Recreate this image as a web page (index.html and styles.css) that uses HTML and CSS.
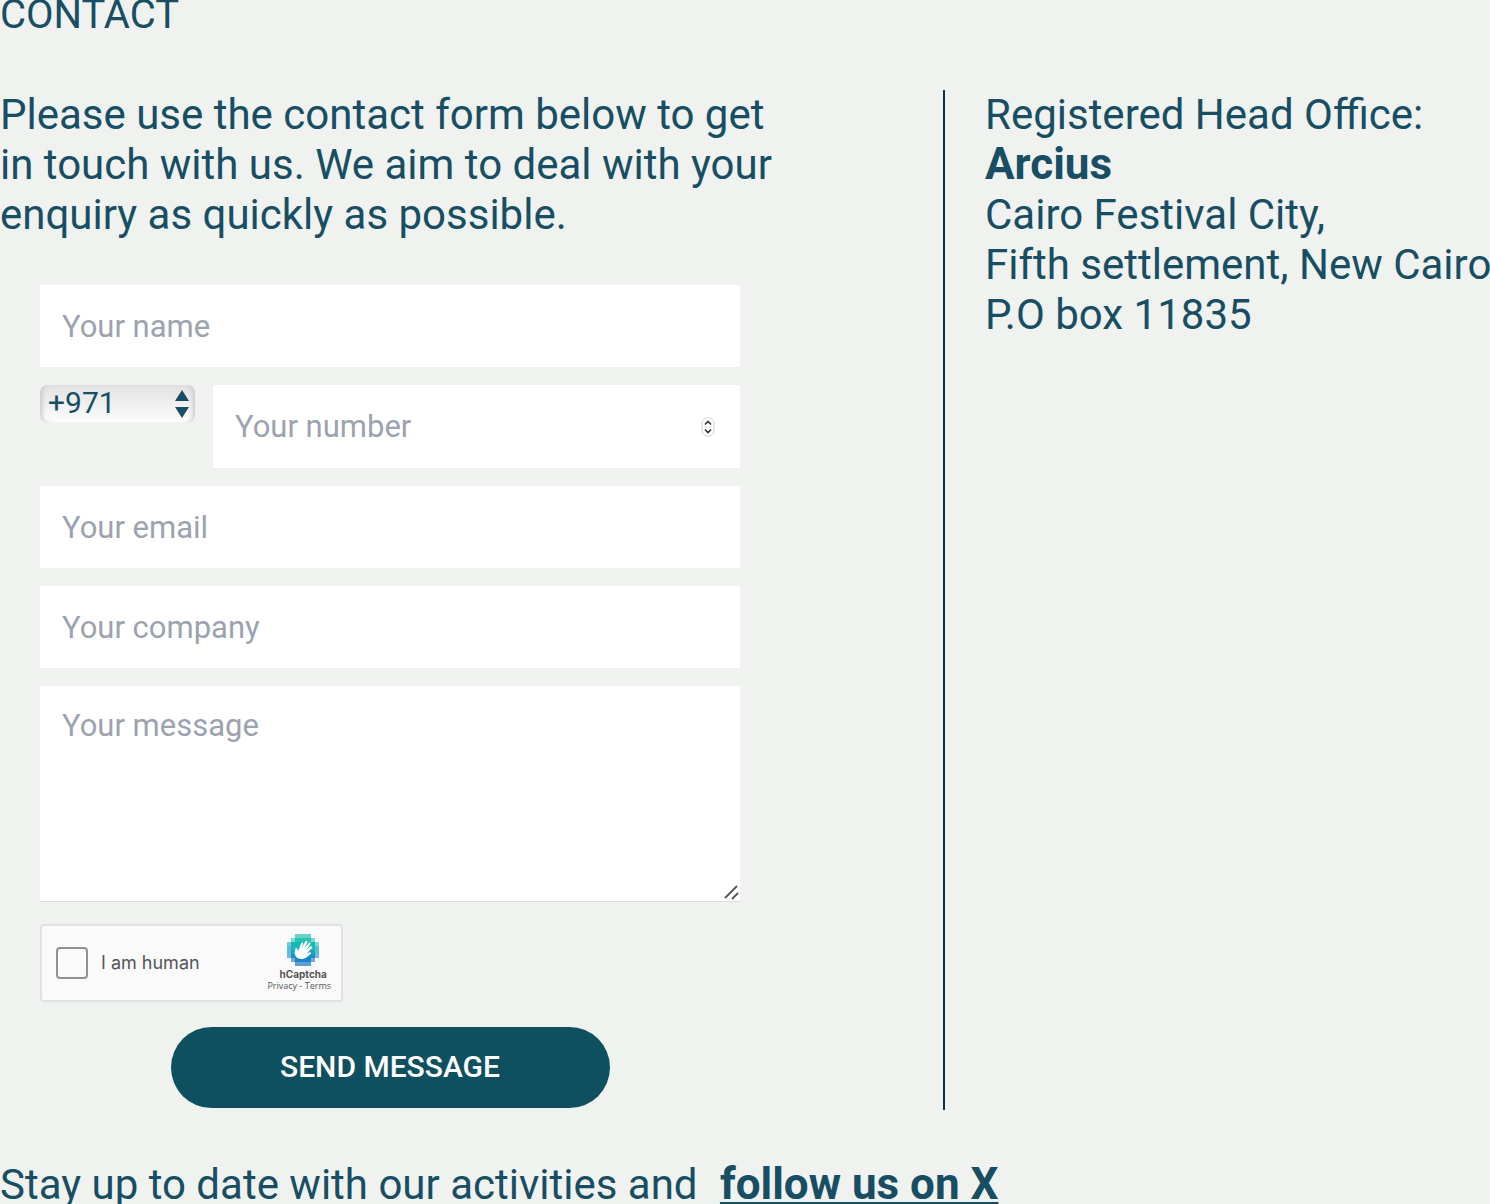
FILE: index.html
```html
<!DOCTYPE html>
<html lang="en">
<head>
  <meta charset="UTF-8">
  <title>Contact</title>
  <meta name="viewport" content="width=device-width, initial-scale=1">
  <link rel="stylesheet" href="styles.css">
</head>
<body>
  <h1>CONTACT</h1>

  <main class="columns">
    <section class="contact">
      <p class="intro">Please use the contact form below to get<br>in touch with us. We aim to deal with your<br>enquiry as quickly as possible.</p>

      <form class="contact-form">
        <input type="text" name="name" placeholder="Your name" aria-label="Your name">

        <div class="phone-row">
          <div class="code">
            <select name="code" aria-label="Country code">
              <option>+971</option>
              <option>+20</option>
            </select>
            <svg class="code-arrows" viewBox="0 0 14 28" aria-hidden="true">
              <path d="M7 0L14 11H0zM0 17H14L7 28z" fill="#174e63"/>
            </svg>
          </div>
          <div class="number">
            <input type="number" name="number" placeholder="Your number" aria-label="Your number">
            <svg class="stepper" viewBox="0 0 14 20" aria-hidden="true">
              <rect x="1" y="1" width="12" height="18" rx="5" fill="#fff" stroke="#d4d4d4"/>
              <path d="M1 10H13" stroke="#e2e2e2"/>
              <path d="M4 7.500L7 4.500L10 7.500M4 12.500L7 15.500L10 12.500" fill="none" stroke="#333" stroke-width="1.600"/>
            </svg>
          </div>
        </div>

        <input type="email" name="email" placeholder="Your email" aria-label="Your email">
        <input type="text" name="company" placeholder="Your company" aria-label="Your company">
        <div class="message">
          <textarea name="message" placeholder="Your message" aria-label="Your message"></textarea>
          <svg class="grip" viewBox="0 0 16 16" aria-hidden="true">
            <path d="M1 14L13 2M8 15L14 9" stroke="#555" stroke-width="1.800"/>
          </svg>
        </div>

        <div class="captcha">
          <input type="checkbox" id="human">
          <label for="human">I am human</label>
          <div class="captcha-brand">
            <svg viewBox="0 0 32 32" aria-hidden="true" shape-rendering="crispEdges">
              <path d="M8 0H24V4H28V8H32V24H28V28H24V32H8V28H4V24H0V8H4V4H8z" fill="#21b5bc"/>
              <path d="M8 0H24V4H8z" fill="#62d6c9"/>
              <path d="M4 4H28V8H4z" fill="#27c2b5"/>
              <path d="M4 4H8V8H4zM24 4H28V8H24zM28 8H32V12H28z" fill="#7cdacf"/>
              <path d="M4 8H28V12H4z" fill="#12b8b2"/>
              <path d="M0 8H4V12H0z" fill="#75ccd2"/>
              <path d="M0 12H4V20H0zM28 12H32V20H28z" fill="#5dbfd3"/>
              <path d="M4 16H28V20H4z" fill="#16a5c4"/>
              <path d="M4 20H28V24H4z" fill="#1891c7"/>
              <path d="M0 20H4V24H0zM28 20H32V24H28z" fill="#75b7df"/>
              <path d="M4 24H28V28H4z" fill="#2085c8"/>
              <path d="M4 24H8V28H4zM24 24H28V28H24z" fill="#73a9dc"/>
              <path d="M8 28H24V32H8z" fill="#5b9fda"/>
              <path shape-rendering="auto" d="M8.500 14.500C9.800 13.500 10.500 15 11.300 17L14 9.500C14.800 7.700 16.700 8.300 16.200 10L14.700 14.300L18.300 7.600C19.400 5.900 21.100 7 20.300 8.600L17 15L21.500 9C22.800 7.500 24.400 8.800 23.300 10.400L19 16.300L23.300 12.600C24.800 11.500 26 13.100 24.700 14.500L19.800 19.500L22.500 18.300C24 17.700 24.700 19.200 23.500 20.200C20 22.500 18.500 25 14.500 25C10 25 7.600 21.700 7.600 18.500z" fill="#fff"/>
            </svg>
            <strong>hCaptcha</strong>
            <small><a href="#">Privacy</a> - <a href="#">Terms</a></small>
          </div>
        </div>

        <button type="submit">SEND MESSAGE</button>
      </form>
    </section>

    <address>
      Registered Head Office:<br>
      <strong>Arcius</strong><br>
      Cairo Festival City,<br>
      Fifth settlement, New Cairo<br>
      P.O box 11835
    </address>
  </main>

  <p class="social">Stay up to date with our activities and <a href="#">follow us on X</a></p>
</body>
</html>
```

FILE: styles.css
```css
:root {
  --ink: #174e63;
  --page: #eff2ef;
}
* {
  box-sizing: border-box;
}
body {
  margin: 0;
  font-family: Roboto, "Liberation Sans", sans-serif;
  font-size: 42px;
  line-height: 50px;
  color: var(--ink);
  background: var(--page);
  overflow-x: hidden;
}
h1 {
  margin: 0 0 60px;
  font-size: 40px;
  font-weight: 400;
  line-height: 30px;
}
p {
  margin: 0;
}
.columns {
  display: grid;
  grid-template-columns: minmax(0, 943fr) minmax(0, 547fr);
}
.intro {
  white-space: nowrap;
}
.contact-form {
  display: flex;
  flex-direction: column;
  gap: 18px;
  max-width: 740px;
  margin-top: 45px;
  padding: 0 0 2px 40px;
}
input, textarea, select, button {
  font: inherit;
  color: inherit;
}
.contact-form input:not([type="checkbox"]),
textarea {
  display: block;
  width: 100%;
  height: 82px;
  padding: 0 22px;
  font-size: 31px;
  line-height: 36px;
  background: #fff;
  border: none;
  border-radius: 0;
}
::placeholder {
  color: #9ca3af;
  opacity: 1;
}
.phone-row {
  display: flex;
  align-items: flex-start;
  gap: 18px;
}
.code {
  position: relative;
  flex: 0 0 155px;
}
select {
  display: block;
  width: 100%;
  height: 38px;
  padding: 0 8px 2px;
  font-size: 30px;
  line-height: 36px;
  appearance: none;
  border: none;
  border-radius: 8px;
  background: linear-gradient(#e2e2e2, #fdfdfd);
  box-shadow: inset 5px 0 5px -3px #c8c8c8, inset -5px 0 5px -3px #c8c8c8;
}
.code-arrows {
  position: absolute;
  top: 5px;
  right: 6px;
  width: 14px;
  height: 28px;
  pointer-events: none;
}
.number {
  position: relative;
  flex: 1;
}
.stepper {
  position: absolute;
  top: 32px;
  right: 25px;
  width: 14px;
  height: 20px;
}
.contact-form .number input {
  height: 83px;
  appearance: textfield;
}
.message {
  position: relative;
}
.contact-form textarea {
  height: 216px;
  padding-top: 22px;
  border-bottom: 1px solid #d9dddb;
  resize: none;
}
.grip {
  position: absolute;
  right: 0;
  bottom: 2px;
  width: 16px;
  height: 16px;
}
.captcha {
  display: flex;
  align-items: center;
  width: 303px;
  height: 78px;
  margin-top: 4px;
  padding: 0 10px 0 14px;
  color: #555;
  background: #fafafa;
  border: 2px solid #dfe2e0;
  border-radius: 4px;
}
.captcha input {
  width: 32px;
  height: 32px;
  margin: 0;
  appearance: none;
  background: #fafafa;
  border: 2px solid #919191;
  border-radius: 4px;
}
.captcha label {
  flex: 1;
  padding-left: 13px;
  font: 18px/24px Inter, sans-serif;
}
.captcha-brand {
  display: flex;
  flex-direction: column;
  align-items: center;
  line-height: 12px;
}
.captcha-brand svg {
  width: 32px;
  height: 32px;
  margin: 0 0 2px 8px;
}
.captcha-brand strong {
  margin-left: 8px;
  font: 700 10px/12px Inter, sans-serif;
}
.captcha-brand small {
  font: 9px/12px "Open Sans", sans-serif;
}
.captcha-brand a {
  color: inherit;
  text-decoration: none;
}
button {
  align-self: center;
  width: 439px;
  height: 81px;
  margin-top: 7px;
  padding: 0 0 2px;
  font-size: 30px;
  font-weight: 500;
  color: #fff;
  background: #0f5060;
  border: none;
  border-radius: 41px;
}
address {
  padding-left: 40px;
  font-style: normal;
  white-space: nowrap;
  border-left: 2px solid #0b3348;
}
address strong, .social a {
  font-size: 44px;
  font-weight: 700;
  line-height: 1;
}
.social {
  margin-top: 50px;
  white-space: nowrap;
}
.social a {
  margin-left: 12px;
  color: inherit;
}
```
